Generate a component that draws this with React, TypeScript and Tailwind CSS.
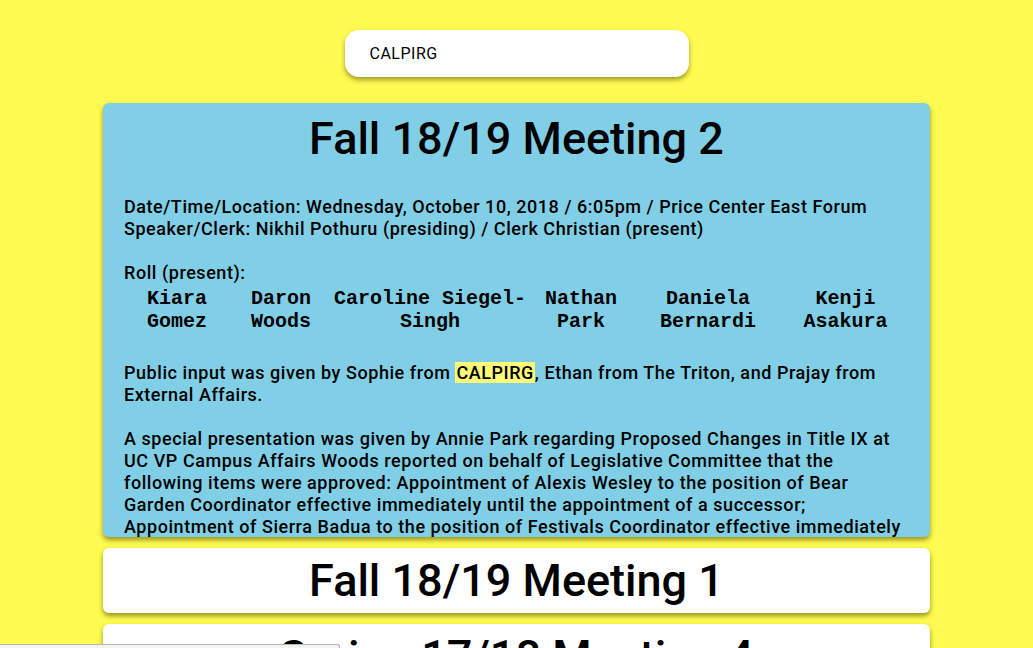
import { useState } from 'react'

// roll cells are laid out as in the original minutes (two lines each)
const roll = [
  { first: 'Kiara', last: 'Gomez', w: 'w-[106px]' },
  { first: 'Daron', last: 'Woods', w: 'w-[102px]' },
  { first: 'Caroline Siegel-', last: 'Singh', w: 'w-[196px]' },
  { first: 'Nathan', last: 'Park', w: 'w-[106px]' },
  { first: 'Daniela', last: 'Bernardi', w: 'w-[148px]' },
  { first: 'Kenji', last: 'Asakura', w: 'w-[127px]' },
]

const meetings = ['Fall 18/19 Meeting 1', 'Spring 17/18 Meeting 4']

export default function App() {
  const [query, setQuery] = useState('CALPIRG')

  return (
    <div className="min-h-screen bg-[#fffb50] pt-[30px] pb-10 font-['Roboto',sans-serif] text-black">
      <div className="flex justify-center">
        <input
          value={query}
          onChange={(e) => setQuery(e.target.value)}
          autoFocus
          className="w-[344px] h-[47px] rounded-[14px] bg-white pl-[25px] text-[16px] tracking-[0.5px] outline-none shadow-[0_3px_5px_rgba(80,80,0,0.55)] caret-black"
        />
      </div>

      <div className="max-w-[827px] mx-auto mt-[26px] flex flex-col gap-[11px]">
        <div className="h-[434px] overflow-hidden rounded-md bg-[#80cfe6] px-[21px] shadow-[0_3px_5px_rgba(80,80,0,0.6)]">
          <h1 className="pt-[9px] text-center text-[45px] leading-[53px] font-medium">Fall 18/19 Meeting 2</h1>
          <div className="mt-[31px] text-[18px] leading-[22px] font-medium tracking-[0.55px]">
            <p>Date/Time/Location: Wednesday, October 10, 2018 / 6:05pm / Price Center East Forum</p>
            <p>Speaker/Clerk: Nikhil Pothuru (presiding) / Clerk Christian (present)</p>
            <p className="mt-[22px]">Roll (present):</p>
            <table className="mt-[3px] w-full table-fixed border-collapse tracking-normal">
              <tbody>
                <tr>
                  {roll.map((r) => (
                    <td key={r.last} className={`${r.w} text-center align-top font-['Liberation_Mono',monospace] text-[20px] leading-[23px] font-bold`}>
                      {r.first}
                      <br />
                      {r.last}
                    </td>
                  ))}
                </tr>
              </tbody>
            </table>
            <p className="mt-[29px]">
              Public input was given by Sophie from <mark className="bg-[#fffa78] text-black px-[1px]">CALPIRG</mark>, Ethan from The Triton, and Prajay from External Affairs.
            </p>
            <p className="mt-[22px]">
              A special presentation was given by Annie Park regarding Proposed Changes in Title IX at UC VP Campus Affairs Woods reported on behalf of Legislative Committee that the following items were approved: Appointment of Alexis Wesley to the position of Bear Garden Coordinator effective immediately until the appointment of a successor; Appointment of Sierra Badua to the position of Festivals Coordinator effective immediately until the appointment of a successor.
            </p>
          </div>
        </div>

        {meetings.map((m) => (
          <div key={m} className="rounded-md bg-white py-[6px] shadow-[0_3px_5px_rgba(80,80,0,0.6)]">
            <h2 className="text-center text-[45px] leading-[53px] font-medium">{m}</h2>
          </div>
        ))}
      </div>

      <div className="fixed bottom-0 left-0 w-[340px] h-[4px] bg-[#f4f4f4] border-t border-r border-[#b5b5b5] rounded-tr-[3px]" />
    </div>
  )
}
